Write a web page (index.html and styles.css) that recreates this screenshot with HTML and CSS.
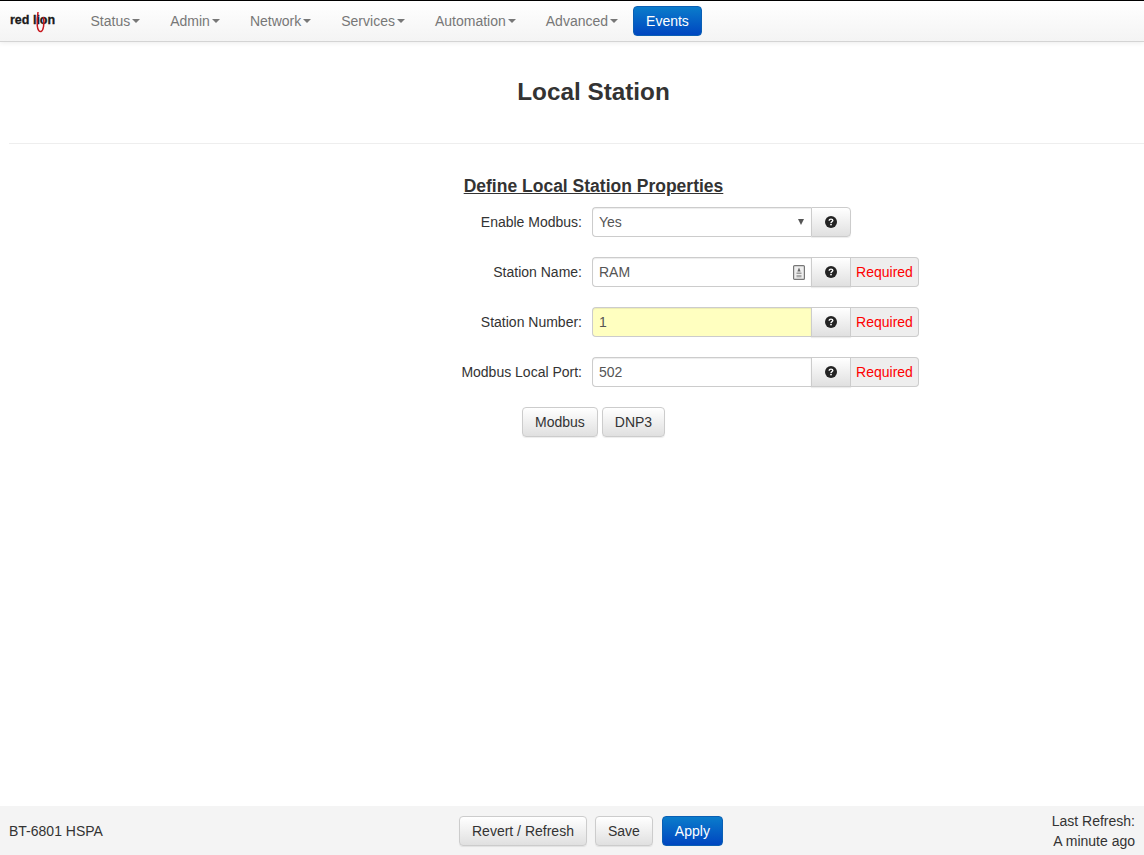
FILE: index.html
```html
<!DOCTYPE html>
<html lang="en">
<head>
<meta charset="utf-8">
<title>Local Station</title>
<link rel="stylesheet" href="styles.css">
</head>
<body>
<header class="navbar">
  <a class="brand"><span class="brand-text">red lion</span>
    <svg class="brand-mark" width="10" height="22" viewBox="0 0 10 22"><path d="M2 1 C1.2 6 1 11 1.3 15 C1.6 19 3.5 21 5 20.5 C7.5 19.5 8.5 13 7.5 6" fill="none" stroke="#c8161d" stroke-width="1.5"/></svg>
  </a>
  <nav class="nav">
    <a class="nav-item">Status<i class="caret"></i></a>
    <a class="nav-item">Admin<i class="caret"></i></a>
    <a class="nav-item">Network<i class="caret"></i></a>
    <a class="nav-item">Services<i class="caret"></i></a>
    <a class="nav-item">Automation<i class="caret"></i></a>
    <a class="nav-item">Advanced<i class="caret"></i></a>
  </nav>
  <a class="btn btn-primary events">Events</a>
</header>

<main class="page">
  <div class="page-header"><h1>Local Station</h1></div>
  <h2 class="section-title">Define Local Station Properties</h2>
  <form class="form">
    <div class="row">
      <label>Enable Modbus:</label>
      <div class="group">
        <div class="field select"><span>Yes</span><i class="select-arrow"></i></div>
        <button type="button" class="help end"><svg class="q" viewBox="0 0 12 12"><circle cx="6" cy="6" r="6" fill="#222"/><path d="M4.2 4.8C4.2 3.7 5 3.1 6 3.1S7.8 3.7 7.8 4.6C7.8 5.7 6 5.7 6 7" fill="none" stroke="#fff" stroke-width="1.4"/><rect x="5.2" y="7.8" width="1.6" height="1.5" fill="#fff"/></svg></button>
      </div>
    </div>
    <div class="row">
      <label>Station Name:</label>
      <div class="group">
        <div class="field keyed"><span>RAM</span>
          <svg class="key" width="12" height="15" viewBox="0 0 12 15"><rect x="0.6" y="0.6" width="10.8" height="13.8" rx="1" fill="#eee" stroke="#777" stroke-width="1.2"/><path d="M6 2.5 L7.6 6.5 H4.4Z" fill="#666"/><rect x="3.5" y="7.6" width="5" height="1.2" fill="#888"/><rect x="3.5" y="10" width="5" height="2.4" fill="#aaa"/></svg>
        </div>
        <button type="button" class="help"><svg class="q" viewBox="0 0 12 12"><circle cx="6" cy="6" r="6" fill="#222"/><path d="M4.2 4.8C4.2 3.7 5 3.1 6 3.1S7.8 3.7 7.8 4.6C7.8 5.7 6 5.7 6 7" fill="none" stroke="#fff" stroke-width="1.4"/><rect x="5.2" y="7.8" width="1.6" height="1.5" fill="#fff"/></svg></button>
        <span class="required">Required</span>
      </div>
    </div>
    <div class="row">
      <label>Station Number:</label>
      <div class="group">
        <div class="field highlighted"><span>1</span></div>
        <button type="button" class="help"><svg class="q" viewBox="0 0 12 12"><circle cx="6" cy="6" r="6" fill="#222"/><path d="M4.2 4.8C4.2 3.7 5 3.1 6 3.1S7.8 3.7 7.8 4.6C7.8 5.7 6 5.7 6 7" fill="none" stroke="#fff" stroke-width="1.4"/><rect x="5.2" y="7.8" width="1.6" height="1.5" fill="#fff"/></svg></button>
        <span class="required">Required</span>
      </div>
    </div>
    <div class="row">
      <label>Modbus Local Port:</label>
      <div class="group">
        <div class="field"><span>502</span></div>
        <button type="button" class="help"><svg class="q" viewBox="0 0 12 12"><circle cx="6" cy="6" r="6" fill="#222"/><path d="M4.2 4.8C4.2 3.7 5 3.1 6 3.1S7.8 3.7 7.8 4.6C7.8 5.7 6 5.7 6 7" fill="none" stroke="#fff" stroke-width="1.4"/><rect x="5.2" y="7.8" width="1.6" height="1.5" fill="#fff"/></svg></button>
        <span class="required">Required</span>
      </div>
    </div>
    <div class="actions">
      <a class="btn btn-default">Modbus</a>
      <a class="btn btn-default">DNP3</a>
    </div>
  </form>
</main>

<footer class="footer">
  <div class="model">BT-6801 HSPA</div>
  <div class="footer-buttons">
    <a class="btn btn-default">Revert / Refresh</a>
    <a class="btn btn-default">Save</a>
    <a class="btn btn-primary apply">Apply</a>
  </div>
  <div class="refresh">Last Refresh:<br>A minute ago</div>
</footer>
</body>
</html>
```
FILE: styles.css
```css
* { box-sizing: border-box; }
html, body { margin: 0; height: 100%; }
body {
  display: flex;
  flex-direction: column;
  height: 855px;
  overflow: hidden;
  font-family: "Liberation Sans", Arial, sans-serif;
  font-size: 14px;
  line-height: 20px;
  color: #333;
  background: #fff;
}

.navbar {
  flex: none;
  display: flex;
  align-items: center;
  height: 42px;
  border-top: 1px solid #000;
  border-bottom: 1px solid #d4d4d4;
  background: linear-gradient(#fff, #f4f4f4);
  box-shadow: 0 1px 5px rgba(0, 0, 0, .08);
  padding-bottom: 1px;
}
.brand {
  position: relative;
  width: 75.5px;
  height: 20px;
  padding-left: 10px;
  flex: none;
}
.brand-text {
  font-weight: 700;
  font-size: 12.5px;
  letter-spacing: 0;
  color: #1a1a1a;
  -webkit-text-stroke: .3px #1a1a1a;
  position: relative;
  top: -2px;
}
.brand-mark { position: absolute; left: 36px; top: 0; }
.nav { display: flex; }
.nav-item {
  display: flex;
  align-items: center;
  padding: 0 15px;
  color: #777;
}
.caret {
  width: 0;
  height: 0;
  margin-left: 2px;
  border-top: 4px solid #777;
  border-left: 4px solid transparent;
  border-right: 4px solid transparent;
}
.events { height: 30px; padding: 0 12.5px; }

.btn {
  display: inline-flex;
  align-items: center;
  justify-content: center;
  height: 30px;
  padding: 0 12px;
  border-radius: 4px;
  border: 1px solid #ccc;
}
.btn-default {
  color: #333;
  background: linear-gradient(#fff, #e0e0e0);
  box-shadow: inset 0 1px 0 rgba(255, 255, 255, .15), 0 1px 1px rgba(0, 0, 0, .075);
}
.btn-primary {
  color: #fff;
  border-color: #0a5fb4;
  background: linear-gradient(#0a7ccb, #0046c0);
}

.page { flex: 1; min-height: 0; padding-left: 9px; }
.page-header {
  height: 102px;
  border-bottom: 1px solid #eee;
  margin-right: -34px;
}
.page-header h1 {
  margin: 0;
  padding-top: 37px;
  font-size: 24.3px;
  line-height: 26px;
  font-weight: 700;
  text-align: center;
}
.section-title {
  margin: 32px -34px 0 0;
  font-size: 17.5px;
  line-height: 20px;
  font-weight: 700;
  text-align: center;
  text-decoration: underline;
}

.form { margin-top: 11px; display: flex; flex-direction: column; gap: 20px; }
.row { display: flex; align-items: center; height: 30px; }
.row label { width: 573px; text-align: right; margin-right: 10px; }
.group { display: flex; height: 30px; }
.field {
  display: flex;
  align-items: center;
  justify-content: space-between;
  width: 219px;
  padding: 0 7px 0 6px;
  border: 1px solid #ccc;
  border-right: 0;
  border-radius: 4px 0 0 4px;
  color: #555;
  box-shadow: inset 0 1px 1px rgba(0, 0, 0, .075);
}
.keyed { padding-right: 6px; }
.highlighted { background: #ffffc0; }
.select-arrow {
  width: 0;
  height: 0;
  border-top: 6px solid #555;
  border-left: 3.5px solid transparent;
  border-right: 3.5px solid transparent;
}
.help {
  display: flex;
  align-items: center;
  justify-content: center;
  width: 40px;
  padding: 0;
  border: 1px solid #ccc;
  background: linear-gradient(#fff, #e0e0e0);
  box-shadow: 0 1px 1px rgba(0, 0, 0, .075);
}
.help.end { border-radius: 0 4px 4px 0; }
.q { width: 12px; height: 12px; }
.required {
  display: flex;
  align-items: center;
  width: 68px;
  justify-content: center;
  border: 1px solid #ccc;
  border-left: 0;
  border-radius: 0 4px 4px 0;
  background: #eee;
  color: #f00;
}
.actions { display: flex; gap: 4px; margin-left: 513px; }

.footer {
  flex: none;
  display: grid;
  grid-template-columns: 450px auto 1fr;
  align-items: center;
  height: 49px;
  padding: 0 9px;
  background: #f4f4f4;
}
.footer-buttons { display: flex; gap: 8px; }
.apply { margin-left: 1px; }
.refresh { text-align: right; }
```
